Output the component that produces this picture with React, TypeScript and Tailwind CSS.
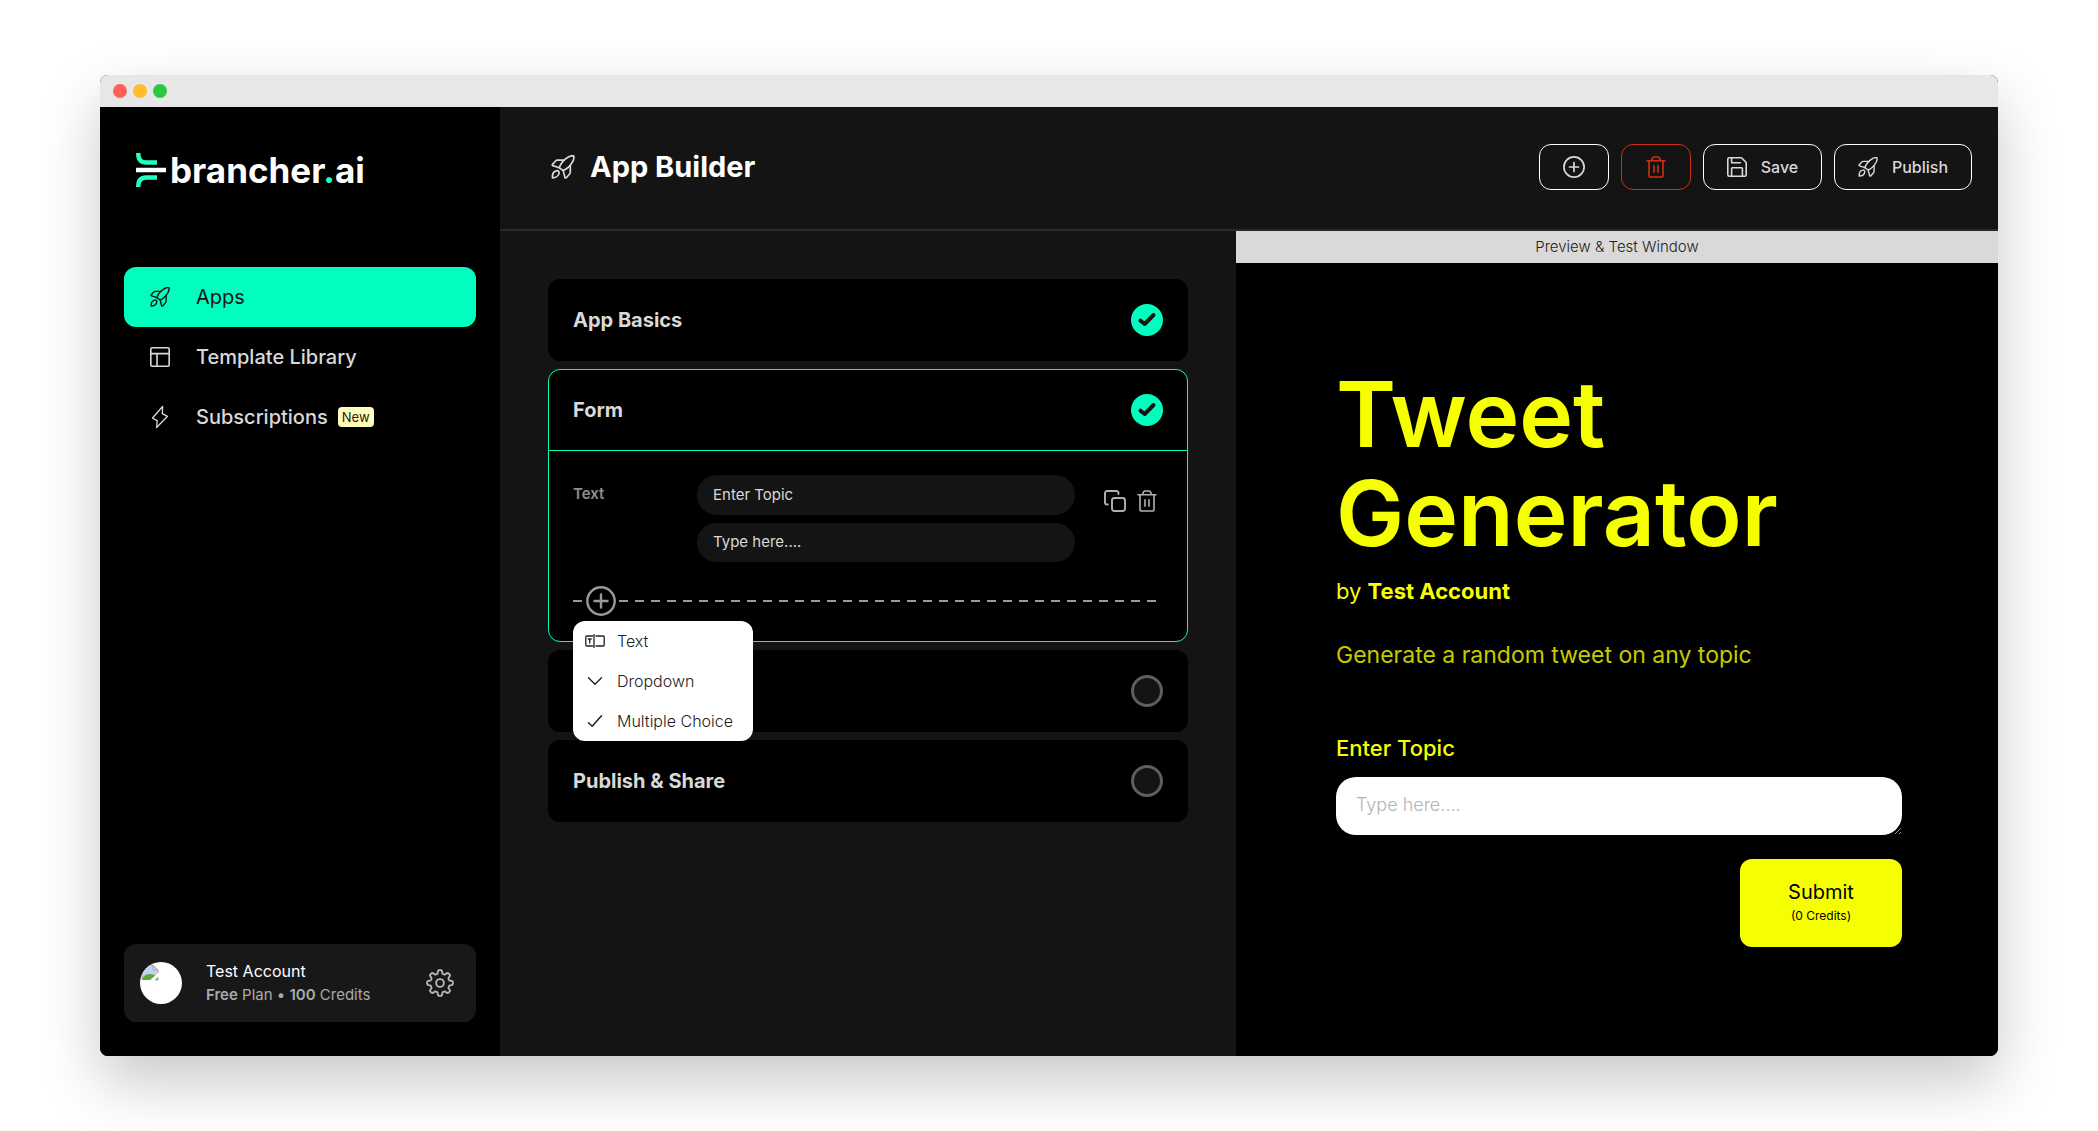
import React from "react";

type IconProps = { className?: string };

const strokeProps = {
  fill: "none",
  stroke: "currentColor",
  strokeLinecap: "round" as const,
  strokeLinejoin: "round" as const,
};

function Rocket({ className }: IconProps) {
  return (
    <svg viewBox="0 0 24 24" className={className} {...strokeProps} strokeWidth={1.7} aria-hidden="true">
      <path d="M8.2 12.8c1.6-4.6 5-8.6 9.2-10.9 1.7-.9 3.7-1.3 5.3-1 .4 1.7 0 3.7-.9 5.4-2.2 4.2-5.4 7.4-9.6 9.3z" />
      <path d="M13.2 5.2H6.4c-.7 0-1.3.3-1.8.8L1.5 9.4c-.4.5-.2 1.1.4 1.2l6.3 2.2" />
      <path d="M19.3 10.6v6.6c0 .7-.2 1.3-.7 1.8l-3.3 3.7c-.5.5-1.2.3-1.4-.3l-1.7-6.8" />
      <path d="M5.8 15.7c1.1-.4 2.500.8 2.300 2.100-.3 3-3.200 5-6.600 5.100-.3-3.500 1-6.600 4.300-7.200z" />
    </svg>
  );
}

function Layout({ className }: IconProps) {
  return (
    <svg viewBox="0 0 20 20" className={className} {...strokeProps} strokeWidth={1.6} aria-hidden="true">
      <rect x="0.8" y="0.8" width="18.4" height="18.4" rx="1.5" />
      <path d="M.8 6.6h18.4M7 6.6v12.6" />
    </svg>
  );
}

function Bolt({ className }: IconProps) {
  return (
    <svg viewBox="0 0 20 24" className={className} {...strokeProps} strokeWidth={1.3} aria-hidden="true">
      <path d="M12.6 1.5 2.5 13l4.7 2.6-.6 6.9L17.5 11.3l-5.2-2.6z" />
    </svg>
  );
}

function Trash({ className }: IconProps) {
  return (
    <svg viewBox="0 0 20 22" className={className} {...strokeProps} strokeWidth={1.6} aria-hidden="true">
      <path d="M1 4.8h18M5.8 4.8C5.8 2.5 6.7 1 8.4 1h3.2c1.7 0 2.600 1.500 2.600 3.800" />
      <path d="M3 4.800v14.400c0 1.100.7 1.800 1.800 1.800h10.400c1.100 0 1.800-.7 1.800-1.800V4.800" />
      <path d="M8 9.700v6.600M12 9.700v6.600" />
    </svg>
  );
}

function Save({ className }: IconProps) {
  return (
    <svg viewBox="0 0 20 20" className={className} {...strokeProps} strokeWidth={1.6} aria-hidden="true">
      <path d="M.8 2.300C.8 1.300 1.400.8 2.300.8h12.200l4.700 4.700v12.200c0 1-.6 1.500-1.500 1.500H2.300c-.9 0-1.500-.5-1.500-1.500z" />
      <path d="M4.600.8v5h8.800M4.600 19.200v-7.600c0-.5.3-.8.8-.8h9.200c.5 0 .8.300.8.8v7.600" />
    </svg>
  );
}

function PlusCircle({ className }: IconProps) {
  return (
    <svg viewBox="0 0 22 22" className={className} {...strokeProps} strokeWidth={1.7} aria-hidden="true">
      <circle cx="11" cy="11" r="10.1" />
      <path d="M11 6.500v9M6.500 11h9" />
    </svg>
  );
}

function Copy({ className }: IconProps) {
  return (
    <svg viewBox="0 0 22 22" className={className} {...strokeProps} strokeWidth={1.9} aria-hidden="true">
      <rect x="8" y="8" width="13" height="13" rx="2.5" />
      <path d="M14.500 4V3A2 2 0 0 0 12.500 1H3a2 2 0 0 0-2 2v9.500a2 2 0 0 0 2 2h.8" />
    </svg>
  );
}

const gearPath =
  Array.from({ length: 160 }, (_, i) => {
    const angle = (i / 160) * Math.PI * 2;
    const radius = 11.2 + 1.7 * Math.tanh(2.2 * Math.cos(8 * angle));
    const x = 14 + radius * Math.cos(angle);
    const y = 14 + radius * Math.sin(angle);
    return `${i ? "L" : "M"}${x.toFixed(2)} ${y.toFixed(2)}`;
  }).join("") + "Z";

function Gear({ className }: IconProps) {
  return (
    <svg viewBox="0 0 28 28" className={className} {...strokeProps} strokeWidth={1.9} aria-hidden="true">
      <path d={gearPath} />
      <circle cx="14" cy="14" r="3.9" />
    </svg>
  );
}

function TextField({ className }: IconProps) {
  return (
    <svg viewBox="0 0 20 14" className={className} {...strokeProps} strokeWidth={1.3} aria-hidden="true">
      <path d="M7.500 2H1.800C1.200 2 .8 2.400.8 3v8c0 .6.4 1 1 1h5.700M11 2h7.200c.6 0 1 .4 1 1v8c0 .6-.4 1-1 1H11M9 .600v12.800M3.200 5h3M4.700 5v4" />
    </svg>
  );
}

function ChevronDown({ className }: IconProps) {
  return (
    <svg viewBox="0 0 20 14" className={className} {...strokeProps} strokeWidth={1.4} aria-hidden="true">
      <path d="M3.500 3.700 10 10.200l6.500-6.500" />
    </svg>
  );
}

function Check({ className }: IconProps) {
  return (
    <svg viewBox="0 0 20 14" className={className} {...strokeProps} strokeWidth={1.5} aria-hidden="true">
      <path d="M3.500 8.800 7.200 12.300 16.500 1.700" />
    </svg>
  );
}

function LogoMark({ className }: IconProps) {
  return (
    <svg viewBox="0 0 30 34" className={className} fill="none" aria-hidden="true">
      <path d="M2.200 0C2.200 6 4.500 9.500 10 9.500h11" stroke="#24ffc2" strokeWidth="4.4" />
      <path d="M2.200 34c0-6 2.300-9.500 7.800-9.500h11" stroke="#24ffc2" strokeWidth="4.4" />
      <path d="M0 17h30" stroke="#fff" strokeWidth="4.6" />
    </svg>
  );
}

function BrokenAvatar() {
  return (
    <svg viewBox="0 0 42 42" className="size-[42px] shrink-0 rounded-full bg-white" role="img" aria-label="Avatar">
      <path d="M2 3h11l5 5v10H2z" fill="#c3d3f2" />
      <path d="M2 18c1-4 4-6 8-6 3 0 5 2 8 0v6z" fill="#5bab3b" />
      <path d="M8 20 19 10v4l-6 6z" fill="#fff" />
      <path d="M2 18V3h11l5 5v3M13 3v5h5M15 18h3v-3" fill="none" stroke="#a8a8a8" strokeWidth="1" />
    </svg>
  );
}

function StatusDone() {
  return (
    <svg viewBox="0 0 32 32" className="size-8 shrink-0" role="img" aria-label="Completed">
      <circle cx="16" cy="16" r="16" fill="#00ffbf" />
      <path d="M9.500 16.700 13.700 20 22.500 11" fill="none" stroke="#141414" strokeWidth="4" strokeLinecap="round" strokeLinejoin="round" />
    </svg>
  );
}

function StatusOpen() {
  return <span className="size-8 shrink-0 rounded-full border-[3px] border-[#5f5f5f] bg-[#141414]" role="img" aria-label="Not completed" />;
}

function Section({ title, done = false }: { title?: string; done?: boolean }) {
  return (
    <section className="flex h-[82px] items-center justify-between rounded-xl bg-black px-[25px]">
      <h2 className="text-xl font-bold text-[#d9d9d9]">{title}</h2>
      {done ? <StatusDone /> : <StatusOpen />}
    </section>
  );
}

const navItem = "flex h-[60px] items-center gap-6 rounded-xl px-6 text-xl";
const headerButton = "flex h-[46px] items-center justify-center gap-3.5 rounded-xl border text-base font-medium";
const menuItem = "flex h-10 w-full items-center gap-3 px-3 text-base font-light text-[#222]";
const fieldInput = "w-full rounded-[20px] bg-[#141414] px-4 pb-0.5 text-[15px] text-[#d9d9d9] outline-none";

export default function App() {
  return (
    <div className="flex min-h-screen bg-white px-[100px] py-[75px] font-['Inter',sans-serif]">
      <div className="flex flex-1 flex-col overflow-hidden rounded-lg bg-[#141414] shadow-[0_26px_60px_rgba(0,0,0,0.22)]">
        <div className="flex h-8 items-center gap-1.5 bg-[#e7e7e7] px-[13px]">
          <span className="size-3.5 rounded-full bg-[#ff5f57]" />
          <span className="size-3.5 rounded-full bg-[#febc2e]" />
          <span className="size-3.5 rounded-full bg-[#28c840]" />
        </div>

        <div className="flex flex-1">
          <aside className="flex w-[400px] shrink-0 flex-col bg-black px-6 pt-[46px] pb-[34px]">
            <a href="#home" className="ml-3 flex h-[34px] items-center gap-1 text-white" aria-label="brancher.ai">
              <LogoMark className="h-[34px] w-[30px]" />
              <span className="text-[35px] leading-8 font-bold">
                brancher<span className="text-[#24ffc2]">.</span>ai
              </span>
            </a>

            <nav className="mt-20">
              <a href="#apps" className={`${navItem} bg-[#00ffbf] text-[#141414]`}>
                <Rocket className="mx-0.5 size-5" />
                Apps
              </a>
              <a href="#templates" className={`${navItem} font-medium text-[#d9d9d9]`}>
                <Layout className="mx-0.5 size-5" />
                Template Library
              </a>
              <a href="#subscriptions" className={`${navItem} font-medium text-[#d9d9d9]`}>
                <Bolt className="mx-0.5 h-6 w-5" />
                <span className="flex items-center gap-2.5">
                  Subscriptions
                  <span className="rounded bg-[#ffffb8] px-1 text-[13px] leading-5 font-normal text-[#222]">New</span>
                </span>
              </a>
            </nav>

            <div className="mt-auto flex h-[78px] items-center rounded-xl bg-[#181818] pr-[22px] pl-4">
              <BrokenAvatar />
              <div className="ml-6 flex-1">
                <p className="text-base leading-[23px] text-white">Test Account</p>
                <p className="text-[15px] leading-[23px] text-[#aaa]">
                  <b className="font-semibold">Free</b> Plan • <b className="font-semibold">100</b> Credits
                </p>
              </div>
              <button type="button" aria-label="Settings" className="text-[#b5b5b5]">
                <Gear className="size-7" />
              </button>
            </div>
          </aside>

          <main className="flex min-w-0 flex-1 flex-col">
            <header className="flex h-[124px] items-center justify-between border-b-2 border-[#2a2a2a] pr-[26px] pb-0.5 pl-[51px]">
              <h1 className="flex items-center gap-[15px] text-[29px] font-bold text-white">
                <Rocket className="size-6 text-[#d9d9d9]" />
                App Builder
              </h1>
              <div className="flex gap-3 text-[#d9d9d9]">
                <button type="button" aria-label="Add" className={`${headerButton} w-[70px] border-white`}>
                  <PlusCircle className="size-[22px]" />
                </button>
                <button type="button" aria-label="Delete" className={`${headerButton} w-[70px] border-[#d12f12] text-[#d12f12]`}>
                  <Trash className="h-[22px] w-5" />
                </button>
                <button type="button" className={`${headerButton} w-[119px] border-white`}>
                  <Save className="size-5" />
                  Save
                </button>
                <button type="button" className={`${headerButton} w-[138px] border-white`}>
                  <Rocket className="size-5" />
                  Publish
                </button>
              </div>
            </header>

            <div className="grid flex-1 grid-cols-[736fr_762fr]">
              <div className="flex min-w-0 flex-col gap-2 p-12">
                <Section title="App Basics" done />

                <section className="relative rounded-xl border border-[#00ffbf] bg-black">
                  <div className="flex h-[81px] items-center justify-between border-b border-[#00ffbf] px-6">
                    <h2 className="text-xl font-bold text-[#d9d9d9]">Form</h2>
                    <StatusDone />
                  </div>
                  <div className="px-6 pt-6 pb-[25px]">
                    <div className="flex items-start">
                      <label htmlFor="field-name" className="w-[124px] pt-2 text-[15px] leading-[22px] font-semibold text-[#8f8f8f]">
                        Text
                      </label>
                      <div className="flex flex-1 flex-col gap-2">
                        <input id="field-name" className={`${fieldInput} h-10`} defaultValue="Enter Topic" />
                        <input aria-label="Placeholder" className={`${fieldInput} h-[39px]`} defaultValue="Type here...." />
                      </div>
                      <div className="ml-[29px] flex gap-[11px] pt-[15px] pr-1.5 text-[#b0b0b0]">
                        <button type="button" aria-label="Duplicate field">
                          <Copy className="size-[22px]" />
                        </button>
                        <button type="button" aria-label="Delete field">
                          <Trash className="h-[22px] w-5" />
                        </button>
                      </div>
                    </div>
                    <div className="mt-6 flex items-center pr-[7px]">
                      <span className="h-0.5 w-[9px] bg-[#999]" />
                      <button
                        type="button"
                        aria-label="Add field"
                        className="mr-[3px] ml-1 flex size-[30px] items-center justify-center rounded-full text-[#999]"
                      >
                        <svg viewBox="0 0 30 30" className="size-[30px]" fill="none" stroke="currentColor" strokeWidth="2.4" aria-hidden="true">
                          <circle cx="15" cy="15" r="13.7" />
                          <path d="M15 8.500v13M8.500 15h13" strokeLinecap="round" />
                        </svg>
                      </button>
                      <span className="h-0.5 flex-1 bg-[repeating-linear-gradient(90deg,#999_0px_9px,transparent_9px_16px)]" />
                    </div>
                  </div>

                  <div role="menu" className="absolute top-[251px] left-6 z-10 w-[180px] rounded-xl bg-white">
                    <button type="button" role="menuitem" className={menuItem}>
                      <TextField className="h-3.5 w-5" />
                      Text
                    </button>
                    <button type="button" role="menuitem" className={menuItem}>
                      <ChevronDown className="h-3.5 w-5" />
                      Dropdown
                    </button>
                    <button type="button" role="menuitem" className={menuItem}>
                      <Check className="h-3.5 w-5" />
                      Multiple Choice
                    </button>
                  </div>
                </section>

                <Section />
                <Section title="Publish & Share" />
              </div>

              <div className="flex min-w-0 flex-col bg-black text-[#f5ff00]">
                <p className="h-8 bg-[#d9d9d9] text-center text-[15px] leading-8 font-light text-[#222]">Preview &amp; Test Window</p>
                <div className="flex flex-col pt-[102px] pr-24 pl-[100px]">
                  <h2 className="max-w-[480px] text-[91px] leading-[99px] font-semibold">Tweet Generator</h2>
                  <p className="mt-3 text-[22px] leading-8">
                    by <b className="font-bold">Test Account</b>
                  </p>
                  <p className="mt-8 text-[23px] leading-8 text-[#c4cc00]">Generate a random tweet on any topic</p>
                  <label htmlFor="topic" className="mt-[61px] text-[22px] leading-8 font-medium">
                    Enter Topic
                  </label>
                  <textarea
                    id="topic"
                    rows={1}
                    placeholder="Type here...."
                    className="mt-[13px] h-[58px] resize rounded-[20px] bg-white px-5 py-[15px] text-lg leading-[26px] font-light text-black outline-none placeholder:text-[#b3b3b3]"
                  />
                  <button type="button" className="mt-6 flex h-[88px] w-[162px] flex-col items-center justify-center self-end rounded-xl bg-[#f5ff00] pb-0.5 text-black">
                    <span className="text-xl leading-7">Submit</span>
                    <span className="text-xs leading-5">(0 Credits)</span>
                  </button>
                </div>
              </div>
            </div>
          </main>
        </div>
      </div>
    </div>
  );
}
